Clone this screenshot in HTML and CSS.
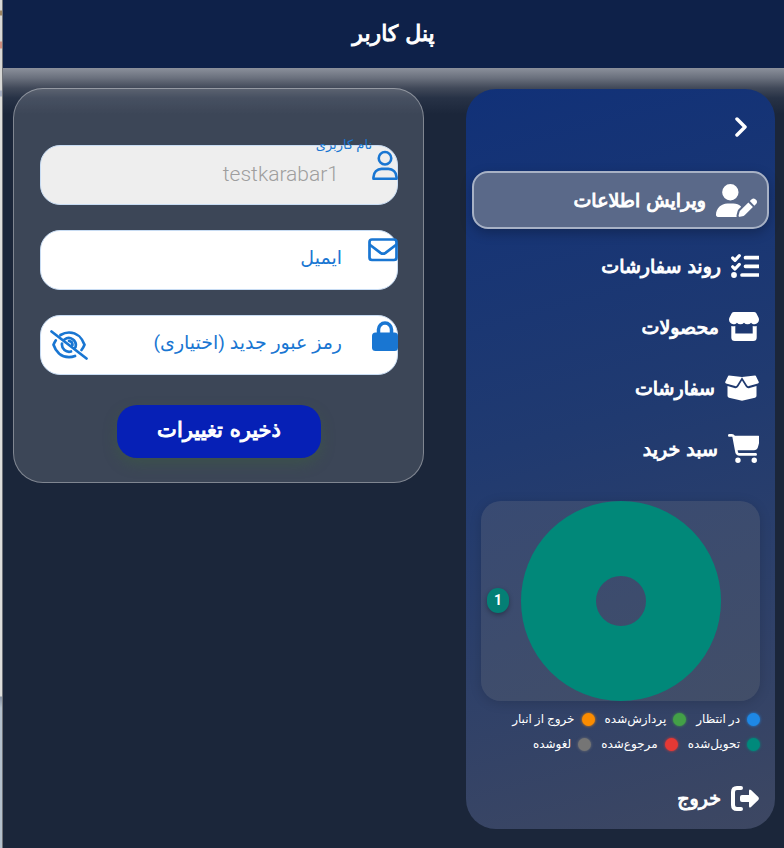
FILE: index.html
```html
<!DOCTYPE html>
<html lang="fa" dir="rtl">
<head>
<meta charset="utf-8">
<meta name="viewport" content="width=device-width, initial-scale=1">
<title>پنل کاربر</title>
<link rel="stylesheet" href="styles.css">
</head>
<body>
<div class="panel">
  <header class="topbar"><h1>پنل کاربر</h1></header>
  <div class="layout">
    <aside class="sidebar">
      <button class="toggle" type="button" aria-label="بستن منو">
        <svg width="12" height="20" viewBox="0 0 12 20"><path d="M2 2l8 8-8 8" fill="none" stroke="currentColor" stroke-width="3.500" stroke-linecap="round" stroke-linejoin="round"/></svg>
      </button>
      <nav class="menu">
        <a class="item active" href="#edit">
          <svg width="41" height="33" viewBox="0 0 640 512" fill="currentColor"><path d="M224 256A128 128 0 1 0 224 0a128 128 0 1 0 0 256zm-45.700 48C79.800 304 0 383.800 0 482.300C0 498.700 13.300 512 29.700 512l293.100 0c-3.100-8.800-3.700-18.400-1.400-27.800l15-60.100c2.800-11.300 8.600-21.500 16.800-29.700l40.300-40.300c-32.100-31-75.700-50.100-123.900-50.100l-91.400 0zm435.500-68.300c-15.600-15.600-40.900-15.600-56.600 0l-29.400 29.400 71 71 29.400-29.400c15.600-15.600 15.600-40.900 0-56.600l-14.400-14.400zM375.900 417c-4.100 4.100-7 9.200-8.400 14.900l-15 60.100c-1.400 5.500 .2 11.200 4.200 15.200s9.700 5.600 15.200 4.200l60.100-15c5.600-1.400 10.800-4.300 14.900-8.400L576.100 358.700l-71-71L375.900 417z"/></svg>
          <span>ویرایش اطلاعات</span>
        </a>
        <a class="item" href="#progress">
          <svg width="28" height="24" viewBox="0 0 28 24" fill="none" stroke="currentColor" stroke-linecap="round" stroke-linejoin="round"><path d="M1.700 4l2.300 2.300L8.300 1.700M1.700 12.800L4 15l4.300-4.600" stroke-width="3.200"/><path d="M14.500 3.700H30M14.500 12.300H30M11 21H30" stroke-width="3.700"/><circle cx="3" cy="21" r="2.900" fill="currentColor" stroke="none"/></svg>
          <span>روند سفارشات</span>
        </a>
        <a class="item" href="#products">
          <svg width="30" height="29" viewBox="0 0 30 29" fill="currentColor"><path d="M5 0h20q1.500 0 2.300 1.300L29.500 5.500c1.500 3-.5 6.700-3.900 6.800-1.400 0-2.700-.6-3.500-1.600a4.700 4.700 0 0 1-7.100 0 4.700 4.700 0 0 1-7.100 0c-.8 1-2.100 1.600-3.500 1.600C1 12.200-1 8.500.5 5.500L2.700 1.300Q3.500 0 5 0z"/><path d="M2.300 14q2 .5 4 0v7.500h17.400V14q2 .5 4 0v11.500q0 3.500-3.500 3.500H5.800q-3.500 0-3.500-3.500z"/></svg>
          <span>محصولات</span>
        </a>
        <a class="item" href="#orders">
          <svg width="34" height="26" viewBox="0 0 34 26" fill="currentColor"><path d="M3 1.200Q3.300.5 4 .6L17 2 30 .6q.7-.1 1 .6l2.700 5.500q.5 1.300-.8 1.800l-9 2.600q-1.200.3-1.900-.8L17 2.300 12 10.300q-.7 1.100-1.900.8l-9-2.600Q-.2 8 .3 6.700z"/><path d="M17 5.400l3.700 6.200q1.400 2.200 3.900 1.500l6.900-2v9.700q0 1.500-1.500 1.900L18 25.500q-1 .3-2 0L4 22.700q-1.500-.4-1.500-1.900v-9.700l6.900 2q2.500.7 3.900-1.500z"/></svg>
          <span>سفارشات</span>
        </a>
        <a class="item" href="#cart">
          <svg width="31" height="29" viewBox="0 0 548 512" fill="currentColor"><path d="M0 24C0 10.700 10.700 0 24 0L69.500 0c22 0 41.500 12.800 50.600 32l411 0c26.300 0 45.500 25 38.600 50.400l-41 152.300c-8.500 31.400-37 53.300-69.500 53.300l-288.500 0 5.400 28.500c2.200 11.300 12.100 19.500 23.600 19.500L488 336c13.300 0 24 10.700 24 24s-10.700 24-24 24l-288.300 0c-34.600 0-64.300-24.600-70.700-58.500L77.400 54.500c-.7-3.800-4-6.500-7.900-6.500L24 48C10.700 48 0 37.300 0 24zM128 464a48 48 0 1 1 96 0 48 48 0 1 1 -96 0zm336-48a48 48 0 1 1 0 96 48 48 0 1 1 0-96z"/></svg>
          <span>سبد خرید</span>
        </a>
      </nav>
      <section class="chart">
        <svg width="200" height="200" viewBox="0 0 200 200"><circle cx="100" cy="100" r="62.500" fill="none" stroke="#018879" stroke-width="75"/></svg>
        <span class="count">1</span>
      </section>
      <ul class="legend">
        <li class="blue">در انتظار</li>
        <li class="green">پردازش‌شده</li>
        <li class="orange">خروج از انبار</li>
        <li class="teal">تحویل‌شده</li>
        <li class="red">مرجوع‌شده</li>
        <li class="grey">لغوشده</li>
      </ul>
      <a class="item logout" href="#logout">
        <svg width="28" height="25" viewBox="0 0 28 25" fill="currentColor"><path d="M10 2H6Q2 2 2 6v13q0 4 4 4h4" fill="none" stroke="currentColor" stroke-width="4" stroke-linecap="round"/><path d="M11 9h7V5q0-2.500 2-1l7.300 7q1.200 1.500 0 3L20 21q-2 1.500-2-1v-4h-7q-2 0-2-2v-3q0-2 2-2z"/></svg>
        <span>خروج</span>
      </a>
    </aside>
    <main>
      <form class="card">
        <div class="field filled">
          <input id="user" type="text" value="testkarabar1" disabled>
          <label for="user">نام کاربری</label>
          <svg class="lead" width="26" height="31" viewBox="0 0 27 31" fill="none" stroke="currentColor" stroke-width="2.700" stroke-linejoin="round"><circle cx="13.500" cy="8" r="6.500"/><path d="M1.500 29.300v-1.500C1.500 22.500 5.500 19 10 19h7c4.500 0 8.500 3.500 8.500 8.800v1.500z"/></svg>
        </div>
        <div class="field">
          <input id="email" type="email">
          <label for="email">ایمیل</label>
          <svg class="lead" width="30" height="31" viewBox="0 0 30 31" fill="none" stroke="currentColor" stroke-width="2.700" stroke-linejoin="round"><rect x="1.500" y="4.500" width="27" height="20.500" rx="2.500"/><path d="M1.500 9.500l11 8.300q2.500 1.800 5 0l11-8.300"/></svg>
        </div>
        <div class="field">
          <input id="pass" type="password">
          <label for="pass">رمز عبور جدید (اختیاری)</label>
          <svg class="lead" width="26" height="31" viewBox="0 0 26 31" fill="currentColor"><rect x="0" y="12.500" width="26" height="18.500" rx="3.500"/><path d="M6.500 14V9.500a6.500 6.500 0 0 1 13 0V14" fill="none" stroke="currentColor" stroke-width="3.500"/></svg>
          <button class="reveal" type="button" aria-label="نمایش رمز">
            <svg width="38" height="30" viewBox="0 0 38 30" fill="none" stroke="currentColor" stroke-width="2.700" stroke-linecap="round" stroke-linejoin="round"><path d="M1.500 1.500l35 27M10.500 5C13.500 3.200 16 2.500 19 2.500c8.500 0 13.500 6.500 15.500 12.200-.8 2-1.800 3.800-3 5.300M25 26c-2 .8-4 1.200-6 1.200-8.500 0-13.500-6.500-15.500-12.500.6-1.500 1.300-3 2.200-4.300M14.500 9.500A7 7 0 0 1 25.500 17M21 21.500a7.200 7.200 0 0 1-9-7.800M19 11a4 4 0 0 1 3.500 4"/></svg>
          </button>
        </div>
        <button class="save" type="submit">ذخیره تغییرات</button>
      </form>
    </main>
  </div>
</div>
</body>
</html>
```
FILE: styles.css
```css
* { box-sizing: border-box; }

body {
  margin: 0;
  min-height: 100vh;
  padding-left: 3px;
  background:
    linear-gradient(90deg, transparent 2px, #6f7278 2px),
    linear-gradient(#d8d8d6 10px, #9b8462 11px 15px, #d8d8d6 16px 41px, #cf8f80 42px 48px, #d8d8d6 49px 90px, #aab2c4 91px 96px, #dededb 97px 696px, #8b95a5 697px, #b4c0cc 708px);
  font-family: Roboto, "DejaVu Sans", sans-serif;
  color: #fff;
}

.panel { min-height: 100vh; background: #1b263a; }

.topbar {
  height: 68px;
  display: flex;
  align-items: center;
  justify-content: center;
  background: #0e2149;
}

h1,
.item,
.save {
  font-family: "DejaVu Sans", sans-serif;
  font-weight: 400;
  -webkit-text-stroke: 1px currentColor;
}

h1 { margin: 0; font-size: 22px; line-height: 32px; }

.layout {
  display: flex;
  align-items: flex-start;
  gap: 42px;
  padding: 20px 9px 19px 10px;
  background: linear-gradient(#8b909b 0, #6a707d 10px, #414959 20px, #273246 30px, #1b263a 46px) no-repeat;
}

.sidebar {
  flex: 0 0 309px;
  display: flex;
  flex-direction: column;
  margin-top: 1px;
  padding: 18px 6px 12px;
  border-radius: 30px;
  background: linear-gradient(165deg, #113178, #203a70 45%, #3d4762);
}

.toggle {
  align-self: flex-start;
  display: grid;
  place-items: center;
  width: 40px;
  height: 40px;
  margin: 0 8px 24px;
  padding: 0;
  border: 0;
  background: none;
  color: #fff;
}

.menu { display: flex; flex-direction: column; }

.item {
  display: flex;
  align-items: center;
  gap: 10px;
  height: 61px;
  padding: 0 10px;
  color: #fff;
  font-size: 19px;
  line-height: 28px;
  text-decoration: none;
}

.item.active {
  height: 58px;
  margin-bottom: 6px;
  border: 2px solid #a7b1c5;
  border-radius: 16px;
  background: #5a6989;
  box-shadow: 0 4px 12px rgba(0, 0, 0, .25);
}

.chart {
  position: relative;
  display: flex;
  justify-content: center;
  margin: 22px 9px 8px;
  border-radius: 20px;
  background: linear-gradient(160deg, #384a72, #424e68);
  box-shadow: 0 2px 12px rgba(0, 0, 0, .15);
}

.count {
  position: absolute;
  left: 6px;
  top: 87px;
  width: 22px;
  border-radius: 11px;
  background: #047f75;
  box-shadow: 0 2px 5px rgba(0, 0, 0, .3);
  font-size: 14px;
  font-weight: 700;
  line-height: 25px;
  text-align: center;
}

.legend {
  display: flex;
  flex-wrap: wrap;
  gap: 5px 10px;
  margin: 0 9px 25px;
  padding: 0;
  list-style: none;
  font-size: 12px;
  line-height: 20px;
}

.legend li { display: flex; align-items: center; gap: 7px; }

.legend li::before {
  content: "";
  width: 13px;
  height: 13px;
  border-radius: 50%;
  background: var(--dot);
  box-shadow: 0 0 3px var(--dot);
}

.blue { --dot: #1e88e5; }
.green { --dot: #43a047; }
.orange { --dot: #fb8c00; }
.teal { --dot: #00897b; }
.red { --dot: #e53935; }
.grey { --dot: #757575; }

.logout { height: 38px; }

main { flex: 1; min-width: 0; }

.card {
  display: flex;
  flex-direction: column;
  gap: 25px;
  padding: 56px 25px 24px 26px;
  border: 1px solid rgba(255, 255, 255, .35);
  border-radius: 30px;
  background: rgba(255, 255, 255, .15);
}

.field { position: relative; color: #1976d2; }

.field input {
  display: block;
  width: 100%;
  height: 60px;
  padding: 0 58px 3px 56px;
  border: 1px solid #c8dcf3;
  border-radius: 20px;
  background: #fff;
  font: 300 21px Roboto, "DejaVu Sans", sans-serif;
}

.field input:disabled { background: #eee; color: #9e9e9e; }

.field label {
  position: absolute;
  right: 56px;
  top: 14px;
  font-size: 19px;
  line-height: 28px;
}

.field.filled label { right: 26px; top: -10px; font-size: 13px; line-height: 20px; }

.lead { position: absolute; right: 0; top: 5px; }

.reveal {
  position: absolute;
  left: 10px;
  top: 15px;
  padding: 0;
  border: 0;
  background: none;
  color: inherit;
}

.reveal svg { display: block; }

.save {
  align-self: center;
  height: 53px;
  margin-top: 5px;
  padding: 0 40px 3px;
  border: 0;
  border-radius: 20px;
  background: #0620b6;
  box-shadow: 0 6px 14px rgba(60, 100, 60, .4);
  color: #fff;
  font-size: 21px;
}
```
